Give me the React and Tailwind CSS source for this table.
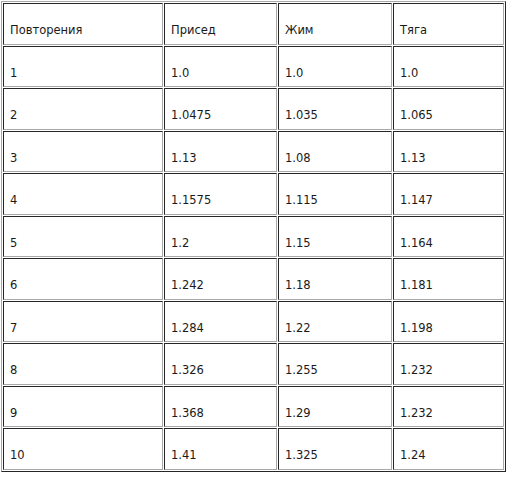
import React from "react";

const rows = [
  ["1", "1.0", "1.0", "1.0"],
  ["2", "1.0475", "1.035", "1.065"],
  ["3", "1.13", "1.08", "1.13"],
  ["4", "1.1575", "1.115", "1.147"],
  ["5", "1.2", "1.15", "1.164"],
  ["6", "1.242", "1.18", "1.181"],
  ["7", "1.284", "1.22", "1.198"],
  ["8", "1.326", "1.255", "1.232"],
  ["9", "1.368", "1.29", "1.232"],
  ["10", "1.41", "1.325", "1.24"],
];

const header = ["Повторения", "Присед", "Жим", "Тяга"];

function Cell({ children }) {
  return (
    <td className="h-[41.5px] align-top pt-[19px] pl-[6px] pr-[4px] text-[11.5px] leading-[14px] text-[#1a1a1a] border border-t-[#262626] border-l-[#262626] border-b-[#a8a8a8] border-r-[#a8a8a8]">
      {children}
    </td>
  );
}

export default function App() {
  return (
    <div className="bg-white w-[509px] h-[477px] pt-px pl-px" style={{ fontFamily: '"DejaVu Sans", Verdana, sans-serif' }}>
      <table className="table-fixed w-[505px] border-separate border-spacing-px border border-t-[#a8a8a8] border-l-[#a8a8a8] border-b-[#262626] border-r-[#262626]">
        <colgroup>
          <col className="w-[160px]" />
          <col className="w-[113px]" />
          <col className="w-[114px]" />
          <col className="w-[111px]" />
        </colgroup>
        <tbody>
          <tr>
            {header.map((h) => (
              <Cell key={h}>{h}</Cell>
            ))}
          </tr>
          {rows.map((r) => (
            <tr key={r[0]}>
              {r.map((v, i) => (
                <Cell key={i}>{v}</Cell>
              ))}
            </tr>
          ))}
        </tbody>
      </table>
    </div>
  );
}
